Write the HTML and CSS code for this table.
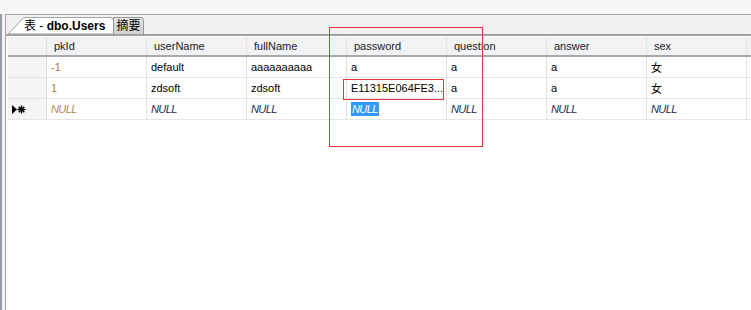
FILE: index.html
```html
<!DOCTYPE html>
<html lang="zh">
<head>
<meta charset="utf-8">
<link rel="stylesheet" href="styles.css">
</head>
<body>
<div class="top"></div>
<div class="window">
  <div class="edge"></div>
  <div class="main">
    <div class="tabstrip">
      <div class="tab active">
        <svg class="tabshape" width="106" height="17" viewBox="0 0 106 17"><path d="M0.5 17 L14.5 1.5 Q15.5 0.5 17 0.5 L102 0.5 Q105.5 0.5 105.5 4 L105.5 17 Z" fill="#ffffff" stroke="#a3a3a3"/></svg>
        <span class="tabtext">表 - <b>dbo.Users</b></span>
      </div>
      <div class="tab other">摘要</div>
    </div>
    <div class="grid">
      <div class="row head">
        <div class="rh"></div>
        <div class="c">pkId</div>
        <div class="c">userName</div>
        <div class="c">fullName</div>
        <div class="c">password</div>
        <div class="c">question</div>
        <div class="c">answer</div>
        <div class="c">sex</div>
        <div class="c last"></div>
      </div>
      <div class="row">
        <div class="rh"></div>
        <div class="c ro">-1</div>
        <div class="c">default</div>
        <div class="c">aaaaaaaaaa</div>
        <div class="c">a</div>
        <div class="c">a</div>
        <div class="c">a</div>
        <div class="c">女</div>
        <div class="c last"></div>
      </div>
      <div class="row">
        <div class="rh"></div>
        <div class="c ro">1</div>
        <div class="c">zdsoft</div>
        <div class="c">zdsoft</div>
        <div class="c">E11315E064FE3...</div>
        <div class="c">a</div>
        <div class="c">a</div>
        <div class="c">女</div>
        <div class="c last"></div>
      </div>
      <div class="row">
        <div class="rh"><svg width="14" height="9" viewBox="0 0 14 9"><path d="M0 0 L5 4.5 L0 9 Z" fill="#000"/><path d="M9.5 0.5 V8.5 M5.5 4.5 H13.5 M6.7 1.7 L12.3 7.3 M12.3 1.7 L6.7 7.3" stroke="#000" stroke-width="1.4"/></svg></div>
        <div class="c ro null">NULL</div>
        <div class="c null">NULL</div>
        <div class="c null">NULL</div>
        <div class="c null"><span class="sel">NULL</span></div>
        <div class="c null">NULL</div>
        <div class="c null">NULL</div>
        <div class="c null">NULL</div>
        <div class="c last"></div>
      </div>
    </div>
  </div>
</div>
<div class="mark big"></div>
<div class="mark small"></div>
</body>
</html>
```
FILE: styles.css
```css
html, body {
  margin: 0;
  padding: 0;
}
body {
  width: 751px;
  height: 310px;
  overflow: hidden;
  background: #f5f5f5;
  font-family: "Liberation Sans", "Noto Sans CJK SC", sans-serif;
  font-size: 11px;
  color: #000;
  position: relative;
}
.top {
  height: 14px;
  background: #f6f6f6;
}
.window {
  display: flex;
  height: 296px;
}
.edge {
  width: 3px;
  flex: none;
  border-left: 2px solid #959ba4;
  border-right: 1px solid #a5a5a5;
  background: #f3f3f3;
}
.main {
  flex: 1;
  border-top: 1px solid #a6a6a6;
  background: #ffffff;
  display: flex;
  flex-direction: column;
}
.tabstrip {
  height: 19px;
  background: #f0f0f0;
  border-bottom: 2px solid #a0a0a0;
  display: flex;
  align-items: flex-end;
  padding-left: 2px;
}
.tab {
  height: 17px;
  position: relative;
  font-size: 12px;
  line-height: 17px;
}
.tab.active {
  width: 106px;
  margin-bottom: -2px;
  height: 19px;
}
.tabshape {
  position: absolute;
  left: 0;
  top: 0;
}
.tabtext {
  position: relative;
  padding-left: 16px;
  display: block;
  line-height: 18px;
}
.tabtext b {
  font-weight: bold;
}
.tab.other {
  width: 29px;
  margin-left: -1px;
  border: 1px solid #9a9a9a;
  border-bottom: none;
  border-radius: 0 4px 0 0;
  background: linear-gradient(#e4e4e4, #cfcfcf);
  text-align: center;
  height: 16px;
  line-height: 16px;
  color: #000;
}
.grid {
  padding-top: 1px;
  padding-left: 2px;
}
.row {
  display: flex;
  height: 20px;
  border-bottom: 1px solid #e6e6e6;
}
.row.head {
  height: 18px;
  background: #f1f2f4;
  border-bottom: 2px solid #a9a9a9;
  color: #222;
}
.rh {
  width: 38px;
  flex: none;
  background: #f4f5f7;
  border-right: 1px solid #dcdcdc;
  display: flex;
  align-items: center;
  padding-left: 4px;
  box-sizing: border-box;
  width: 39px;
}
.row.head .rh {
  background: #f1f2f4;
  border-right: 1px solid #e0e0e0;
}
.c {
  width: 100px;
  flex: none;
  box-sizing: border-box;
  border-right: 1px solid #e2e2e2;
  display: flex;
  align-items: center;
  padding-left: 4px;
  white-space: nowrap;
}
.row.head .c {
  padding-left: 7px;
  border-right: 1px solid #e3e3e3;
}
.c.last {
  width: 10px;
  border-right: none;
}
.ro {
  color: #b27a3a;
}
.null {
  font-style: italic;
  color: #1a2a50;
  letter-spacing: -0.6px;
}
.null.ro {
  color: #b48a4a;
}
.sel {
  background: #3399ff;
  color: #ffffff;
  padding: 1px 1px;
}
.mark {
  position: absolute;
  border: 1px solid #e8353b;
}
.mark.big {
  left: 329px;
  top: 27px;
  width: 152px;
  height: 118px;
}
.mark.small {
  left: 343px;
  top: 79px;
  width: 99px;
  height: 19px;
}
```
